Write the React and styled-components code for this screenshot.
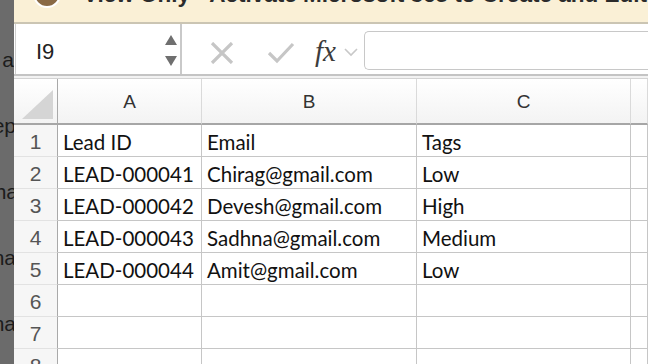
import React from 'react';
import styled, { createGlobalStyle } from 'styled-components';

const GlobalStyle = createGlobalStyle`
    html, body {
        margin: 0;
        padding: 0;
        background: #ffffff;
        overflow: hidden;
    }
`;

const Frame = styled.div`
    display: flex;
    width: 648px;
    height: 364px;
    overflow: hidden;
`;

const BackWindow = styled.div`
    width: 14px;
    flex-shrink: 0;
    background: #6b6b6b;
    overflow: hidden;
    display: flex;
    flex-direction: column;
    align-items: flex-end;
    padding-top: 47px;
    gap: 40px;
    font-family: "Liberation Sans", Arial, sans-serif;
    font-size: 21px;
    line-height: 26px;
    color: #1c1c1c;
`;

const BackText = styled.span`
    white-space: nowrap;
    margin-right: ${(p) => p.$shift || 0}px;
`;

const Workbook = styled.div`
    flex: 1;
    display: flex;
    flex-direction: column;
    min-width: 0;
    overflow: hidden;
    & > * {
        flex-shrink: 0;
    }
`;

const Banner = styled.div`
    height: 22px;
    background: #faf0d6;
    border-bottom: 2px solid #cbc5b3;
    overflow: hidden;
    display: flex;
    align-items: flex-end;
    gap: 22px;
    padding-left: 19px;
    white-space: nowrap;
`;

const BannerIcon = styled.div`
    width: 24px;
    height: 24px;
    flex-shrink: 0;
    border-radius: 50%;
    background: #8a6a45;
    border: 2px solid #ffffff;
    margin-bottom: 14px;
`;

const BannerText = styled.span`
    font-family: "Liberation Sans", Arial, sans-serif;
    font-weight: 700;
    font-size: 22.5px;
    line-height: 22px;
    color: #2b2b2b;
    margin-bottom: 16px;
`;

const FormulaBar = styled.div`
    height: 50px;
    display: flex;
    align-items: stretch;
    background: #ffffff;
    border-bottom: 2px solid #c4c4c4;
`;

const NameBox = styled.div`
    width: 167px;
    margin-left: 1px;
    box-sizing: border-box;
    border-left: 1px solid #cfcfcf;
    border-right: 2px solid #c9c9c9;
    display: flex;
    align-items: center;
    justify-content: space-between;
    padding: 0 3px 0 20px;
`;

const CellRef = styled.span`
    font-family: "Liberation Sans", Arial, sans-serif;
    font-size: 22px;
    color: #222222;
    margin-top: 6px;
`;

const Spinner = styled.div`
    display: flex;
    flex-direction: column;
    gap: 11px;
    margin-top: 2px;
`;

const Arrow = styled.div`
    width: 0;
    height: 0;
    border-left: 6px solid transparent;
    border-right: 6px solid transparent;
    ${(p) => (p.$up ? 'border-bottom' : 'border-top')}: 10px solid #6f6f6f;
`;

const Tools = styled.div`
    display: flex;
    align-items: center;
    padding: 7px 0 0 28px;
`;

const ToolIcon = styled.svg`
    display: block;
    margin-right: ${(p) => p.$gap}px;
`;

const Fx = styled.span`
    font-family: "Liberation Serif", "Times New Roman", serif;
    font-style: italic;
    font-size: 29px;
    color: #3c3c3c;
    margin-right: 8px;
    margin-top: -2px;
`;

const FormulaInput = styled.div`
    flex: 1;
    margin: 7px 0 4px 6px;
    border: 1px solid #c8c8c8;
    border-right: none;
    border-radius: 5px 0 0 5px;
    background: #ffffff;
`;

const Divider = styled.div`
    height: 2px;
    background: #f2f2f2;
    border-bottom: 1px solid #d3d3d3;
`;

const Sheet = styled.div`
    display: grid;
    grid-template-columns: 44px 144px 215px 214px 1fr;
    grid-template-rows: 46px;
    grid-auto-rows: 32px;
    font-family: "Lato", "Liberation Sans", sans-serif;
`;

const Corner = styled.div`
    box-sizing: border-box;
    background: linear-gradient(#ffffff, #f3f3f3);
    border-right: 1px solid #a9a9a9;
    border-bottom: 2px solid #a6a6a6;
    display: flex;
    align-items: flex-end;
    justify-content: flex-end;
    padding: 0 4px 4px 0;
`;

const ColHead = styled.div`
    box-sizing: border-box;
    background: linear-gradient(#ffffff, #f3f3f3);
    border-right: 1px solid #dadada;
    border-bottom: 2px solid #a6a6a6;
    display: flex;
    align-items: center;
    justify-content: center;
    font-family: "Liberation Sans", Arial, sans-serif;
    font-size: 19px;
    color: #333333;
    padding-top: 2px;
`;

const RowHead = styled.div`
    box-sizing: border-box;
    background: #f6f6f6;
    border-right: 1px solid #a9a9a9;
    border-bottom: 1px solid #e2e2e2;
    display: flex;
    align-items: center;
    justify-content: center;
    font-family: "Liberation Sans", Arial, sans-serif;
    font-size: 21px;
    color: #555555;
    padding-top: 3px;
`;

const Cell = styled.div`
    box-sizing: border-box;
    border-right: 1px solid #c6c6c6;
    border-bottom: 1px solid #c6c6c6;
    display: flex;
    align-items: center;
    padding: 3px 0 0 5px;
    font-size: 20.5px;
    color: #111111;
    white-space: nowrap;
    overflow: hidden;
`;

const rows = [
    ['Lead ID', 'Email', 'Tags'],
    ['LEAD-000041', 'Chirag@gmail.com', 'Low'],
    ['LEAD-000042', 'Devesh@gmail.com', 'High'],
    ['LEAD-000043', 'Sadhna@gmail.com', 'Medium'],
    ['LEAD-000044', 'Amit@gmail.com', 'Low'],
    ['', '', ''],
    ['', '', ''],
    ['', '', ''],
];

const App = () => {
    return (
        <Frame>
            <GlobalStyle />
            <BackWindow>
                <BackText>a</BackText>
                <BackText $shift={-2}>ep</BackText>
                <BackText $shift={-4}>ha</BackText>
                <BackText $shift={-2}>na</BackText>
                <BackText $shift={-2}>na</BackText>
            </BackWindow>
            <Workbook>
                <Banner>
                    <BannerIcon />
                    <BannerText>View Only - Activate Microsoft 365 to Create and Edit</BannerText>
                </Banner>
                <FormulaBar>
                    <NameBox>
                        <CellRef>I9</CellRef>
                        <Spinner>
                            <Arrow $up />
                            <Arrow />
                        </Spinner>
                    </NameBox>
                    <Tools>
                        <ToolIcon $gap={33} width="24" height="22" viewBox="0 0 24 22">
                            <path d="M2 1 L22 21 M22 1 L2 21" stroke="#c6c6c6" strokeWidth="3.2" />
                        </ToolIcon>
                        <ToolIcon $gap={20} width="28" height="22" viewBox="0 0 28 22">
                            <path d="M2 11 L10 19 L26 2" stroke="#c6c6c6" strokeWidth="3.2" fill="none" />
                        </ToolIcon>
                        <Fx>fx</Fx>
                        <ToolIcon $gap={0} width="14" height="9" viewBox="0 0 14 9">
                            <path d="M1 1 L7 7 L13 1" stroke="#c8c8c8" strokeWidth="1.6" fill="none" />
                        </ToolIcon>
                    </Tools>
                    <FormulaInput />
                </FormulaBar>
                <Divider />
                <Sheet>
                    <Corner>
                        <svg width="31" height="29" viewBox="0 0 31 29">
                            <path d="M31 0 L31 29 L0 29 Z" fill="#d5d5d5" />
                        </svg>
                    </Corner>
                    <ColHead>A</ColHead>
                    <ColHead>B</ColHead>
                    <ColHead>C</ColHead>
                    <ColHead />
                    {rows.map((row, i) => (
                        <React.Fragment key={i}>
                            <RowHead>{i + 1}</RowHead>
                            {row.map((value, j) => (
                                <Cell key={j}>{value}</Cell>
                            ))}
                            <Cell />
                        </React.Fragment>
                    ))}
                </Sheet>
            </Workbook>
        </Frame>
    );
};

export default App;
